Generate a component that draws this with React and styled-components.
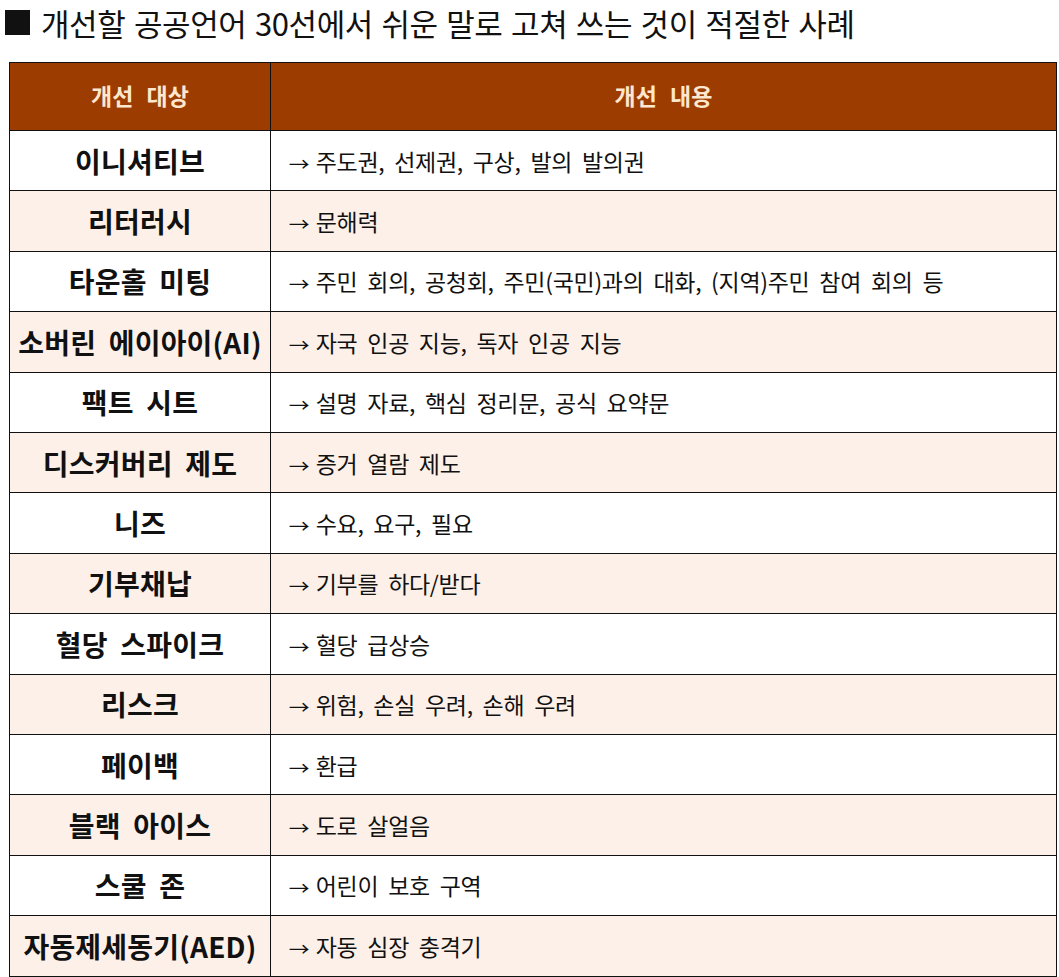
import React from 'react';
import styled, { createGlobalStyle } from 'styled-components';

const GlobalStyle = createGlobalStyle`
  * { box-sizing: border-box; }
  body {
    margin: 0;
    background: #fff;
    font-family: "Noto Sans CJK KR", "Noto Sans", sans-serif;
    color: #111;
  }
`;

const rows = [
  ['이니셔티브', '주도권, 선제권, 구상, 발의 발의권'],
  ['리터러시', '문해력'],
  ['타운홀 미팅', '주민 회의, 공청회, 주민(국민)과의 대화, (지역)주민 참여 회의 등'],
  ['소버린 에이아이(AI)', '자국 인공 지능, 독자 인공 지능'],
  ['팩트 시트', '설명 자료, 핵심 정리문, 공식 요약문'],
  ['디스커버리 제도', '증거 열람 제도'],
  ['니즈', '수요, 요구, 필요'],
  ['기부채납', '기부를 하다/받다'],
  ['혈당 스파이크', '혈당 급상승'],
  ['리스크', '위험, 손실 우려, 손해 우려'],
  ['페이백', '환급'],
  ['블랙 아이스', '도로 살얼음'],
  ['스쿨 존', '어린이 보호 구역'],
  ['자동제세동기(AED)', '자동 심장 충격기'],
];

const Page = styled.div`
  width: 1059px;
  padding: 0 2px 0 9px;
`;

const Title = styled.h1`
  display: flex;
  align-items: center;
  gap: 11px;
  height: 62px;
  margin: 0 0 0 -4px;
  padding-bottom: 18px;
  font-size: 31px;
  font-weight: 400;
  letter-spacing: -0.4px;
  word-spacing: 2px;
  color: #111;
`;

const Square = styled.span`
  width: 25px;
  height: 25px;
  background: #111;
  flex: none;
`;

const Table = styled.div`
  border: 1.5px solid #111;
`;

const Row = styled.div`
  display: grid;
  grid-template-columns: 261px 1fr;
  height: ${p => (p.$head ? '68px' : '60.4px')};
  background: ${p => (p.$head ? '#9c3c00' : p.$alt ? '#fdf0e8' : '#fff')};
  border-bottom: 1px solid #111;
  &:last-child { border-bottom: none; }
`;

const Cell = styled.div`
  display: flex;
  align-items: center;
  justify-content: ${p => (p.$left ? 'center' : 'flex-start')};
  padding: ${p => (p.$left ? '0 2px' : '0 0 0 19px')};
  border-right: ${p => (p.$left ? '1px solid #111' : 'none')};
  white-space: nowrap;
`;

const HeadCell = styled(Cell)`
  justify-content: center;
  padding: 0 0 4px;
  font-size: 23px;
  font-weight: 700;
  color: #fde8cf;
  word-spacing: 8px;
`;

const Term = styled.span`
  font-size: 28px;
  font-weight: 700;
  letter-spacing: 0.2px;
  word-spacing: 6px;
  color: #111;
`;

const Fix = styled.span`
  font-size: 23px;
  font-weight: 400;
  letter-spacing: -0.3px;
  word-spacing: 5px;
  color: #111;
`;

const Arrow = styled.span`
  display: inline-block;
  margin-right: 8px;
  font-size: 18px;
  transform: scaleX(1.15);
`;

export default function App() {
  return (
    <Page>
      <GlobalStyle />
      <Title>
        <Square />
        개선할 공공언어 30선에서 쉬운 말로 고쳐 쓰는 것이 적절한 사례
      </Title>
      <Table>
        <Row $head>
          <HeadCell $left>개선 대상</HeadCell>
          <HeadCell>개선 내용</HeadCell>
        </Row>
        {rows.map(([term, fix], i) => (
          <Row key={term} $alt={i % 2 === 1}>
            <Cell $left><Term>{term}</Term></Cell>
            <Cell>
              <Fix><Arrow>→</Arrow>{fix}</Fix>
            </Cell>
          </Row>
        ))}
      </Table>
    </Page>
  );
}
